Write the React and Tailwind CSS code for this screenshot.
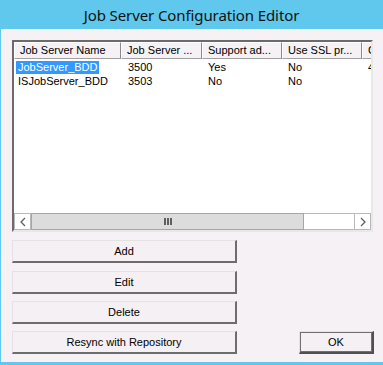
import React from 'react'

const cols = [
  { name: 'Job Server Name', w: 'w-[107px]' },
  { name: 'Job Server ...', w: 'w-[81px]' },
  { name: 'Support ad...', w: 'w-[80px]' },
  { name: 'Use SSL pr...', w: 'w-[80px]' },
  { name: 'C', w: 'w-[40px]' },
]

const rows = [
  ['JobServer_BDD', '3500', 'Yes', 'No', '4'],
  ['ISJobServer_BDD', '3503', 'No', 'No', ''],
]

const Btn = ({ children, className = '', def = false }) => (
  <button
    className={`h-[23px] flex items-center justify-center text-[11px] text-black bg-[#f4f0f4] border border-t-[#e3e3e3] border-l-[#e3e3e3] ${
      def
        ? 'border-r-[#505050] border-b-[#505050] border-r-2 border-b-2 shadow-[inset_0_0_0_1px_#707070]'
        : 'border-r-[#6d6d6d] border-b-[#6d6d6d] border-r-2 border-b-2'
    } ${className}`}
  >
    {children}
  </button>
)

const Arrow = ({ dir }) => (
  <svg width="8" height="10" viewBox="0 0 8 10">
    <path
      d={dir === 'left' ? 'M6 1 L2 5 L6 9' : 'M2 1 L6 5 L2 9'}
      fill="none"
      stroke="#606060"
      strokeWidth="1.3"
    />
  </svg>
)

export default function App() {
  return (
    <div className="w-[383px] h-[365px] bg-[#5fc8ec] flex flex-col font-['Liberation_Sans',Arial,sans-serif] overflow-hidden">
      {/* title bar */}
      <div className="h-[29px] flex items-center justify-center">
        <span className="text-[15px] text-[#111] font-['Noto_Sans',sans-serif] tracking-[-0.1px] pt-[1px]">
          Job Server Configuration Editor
        </span>
      </div>

      {/* client */}
      <div className="flex-1 ml-[1px] mb-[3px] bg-[#f5f1f5] px-[11px] pt-[11px]">
        {/* list view */}
        <div className="w-[361px] h-[192px] bg-white border-2 border-t-[#6b6b6b] border-l-[#6b6b6b] border-r-[#e8e8e8] border-b-[#e8e8e8] flex flex-col">
          <div className="flex-1 overflow-hidden">
            <div className="flex h-[17px] w-max">
              {cols.map((c) => (
                <div
                  key={c.name}
                  className={`${c.w} shrink-0 h-[17px] bg-[#f5f1f5] border border-t-white border-l-white border-r-[#8a8a8a] border-b-[#a0a0a0] text-[11px] leading-[15px] pl-[5px] text-black whitespace-nowrap overflow-hidden`}
                >
                  {c.name}
                </div>
              ))}
            </div>
            <div className="pt-[2px]">
              {rows.map((r, i) => (
                <div key={i} className="flex h-[14px] text-[11px] leading-[13px] text-black w-max">
                  <div className="w-[107px] shrink-0 pl-[2px]">
                    <span className={`inline-block px-[2px] ${i === 0 ? 'bg-[#3399ff] text-white w-[83px]' : ''}`}>{r[0]}</span>
                  </div>
                  <div className="w-[81px] shrink-0 pl-[7px]">{r[1]}</div>
                  <div className="w-[80px] shrink-0 pl-[6px]">{r[2]}</div>
                  <div className="w-[80px] shrink-0 pl-[6px]">{r[3]}</div>
                  <div className="w-[40px] shrink-0 pl-[6px]">{r[4]}</div>
                </div>
              ))}
            </div>
          </div>

          {/* horizontal scrollbar */}
          <div className="h-[17px] flex bg-white">
            <div className="w-[17px] h-[17px] border border-[#b9b9b9] flex items-center justify-center">
              <Arrow dir="left" />
            </div>
            <div className="w-[273px] h-[17px] bg-[#dcdcdc] border border-[#a6a6a6] flex items-center justify-center gap-[1px]">
              <div className="w-[2px] h-[7px] bg-[#606060]" />
              <div className="w-[2px] h-[7px] bg-[#606060]" />
              <div className="w-[2px] h-[7px] bg-[#606060]" />
            </div>
            <div className="flex-1 h-[17px] border-t border-b border-[#b9b9b9]" />
            <div className="w-[17px] h-[17px] border border-[#b9b9b9] flex items-center justify-center">
              <Arrow dir="right" />
            </div>
          </div>
        </div>

        {/* buttons */}
        <div className="flex justify-between items-end mt-[8px]">
          <div className="flex flex-col w-[225px]">
            <Btn>Add</Btn>
            <Btn className="mt-[8px]">Edit</Btn>
            <Btn className="mt-[7px]">Delete</Btn>
            <Btn className="mt-[7px]">Resync with Repository</Btn>
          </div>
          <Btn def className="w-[75px] mr-[-2px]">OK</Btn>
        </div>
      </div>
    </div>
  )
}
